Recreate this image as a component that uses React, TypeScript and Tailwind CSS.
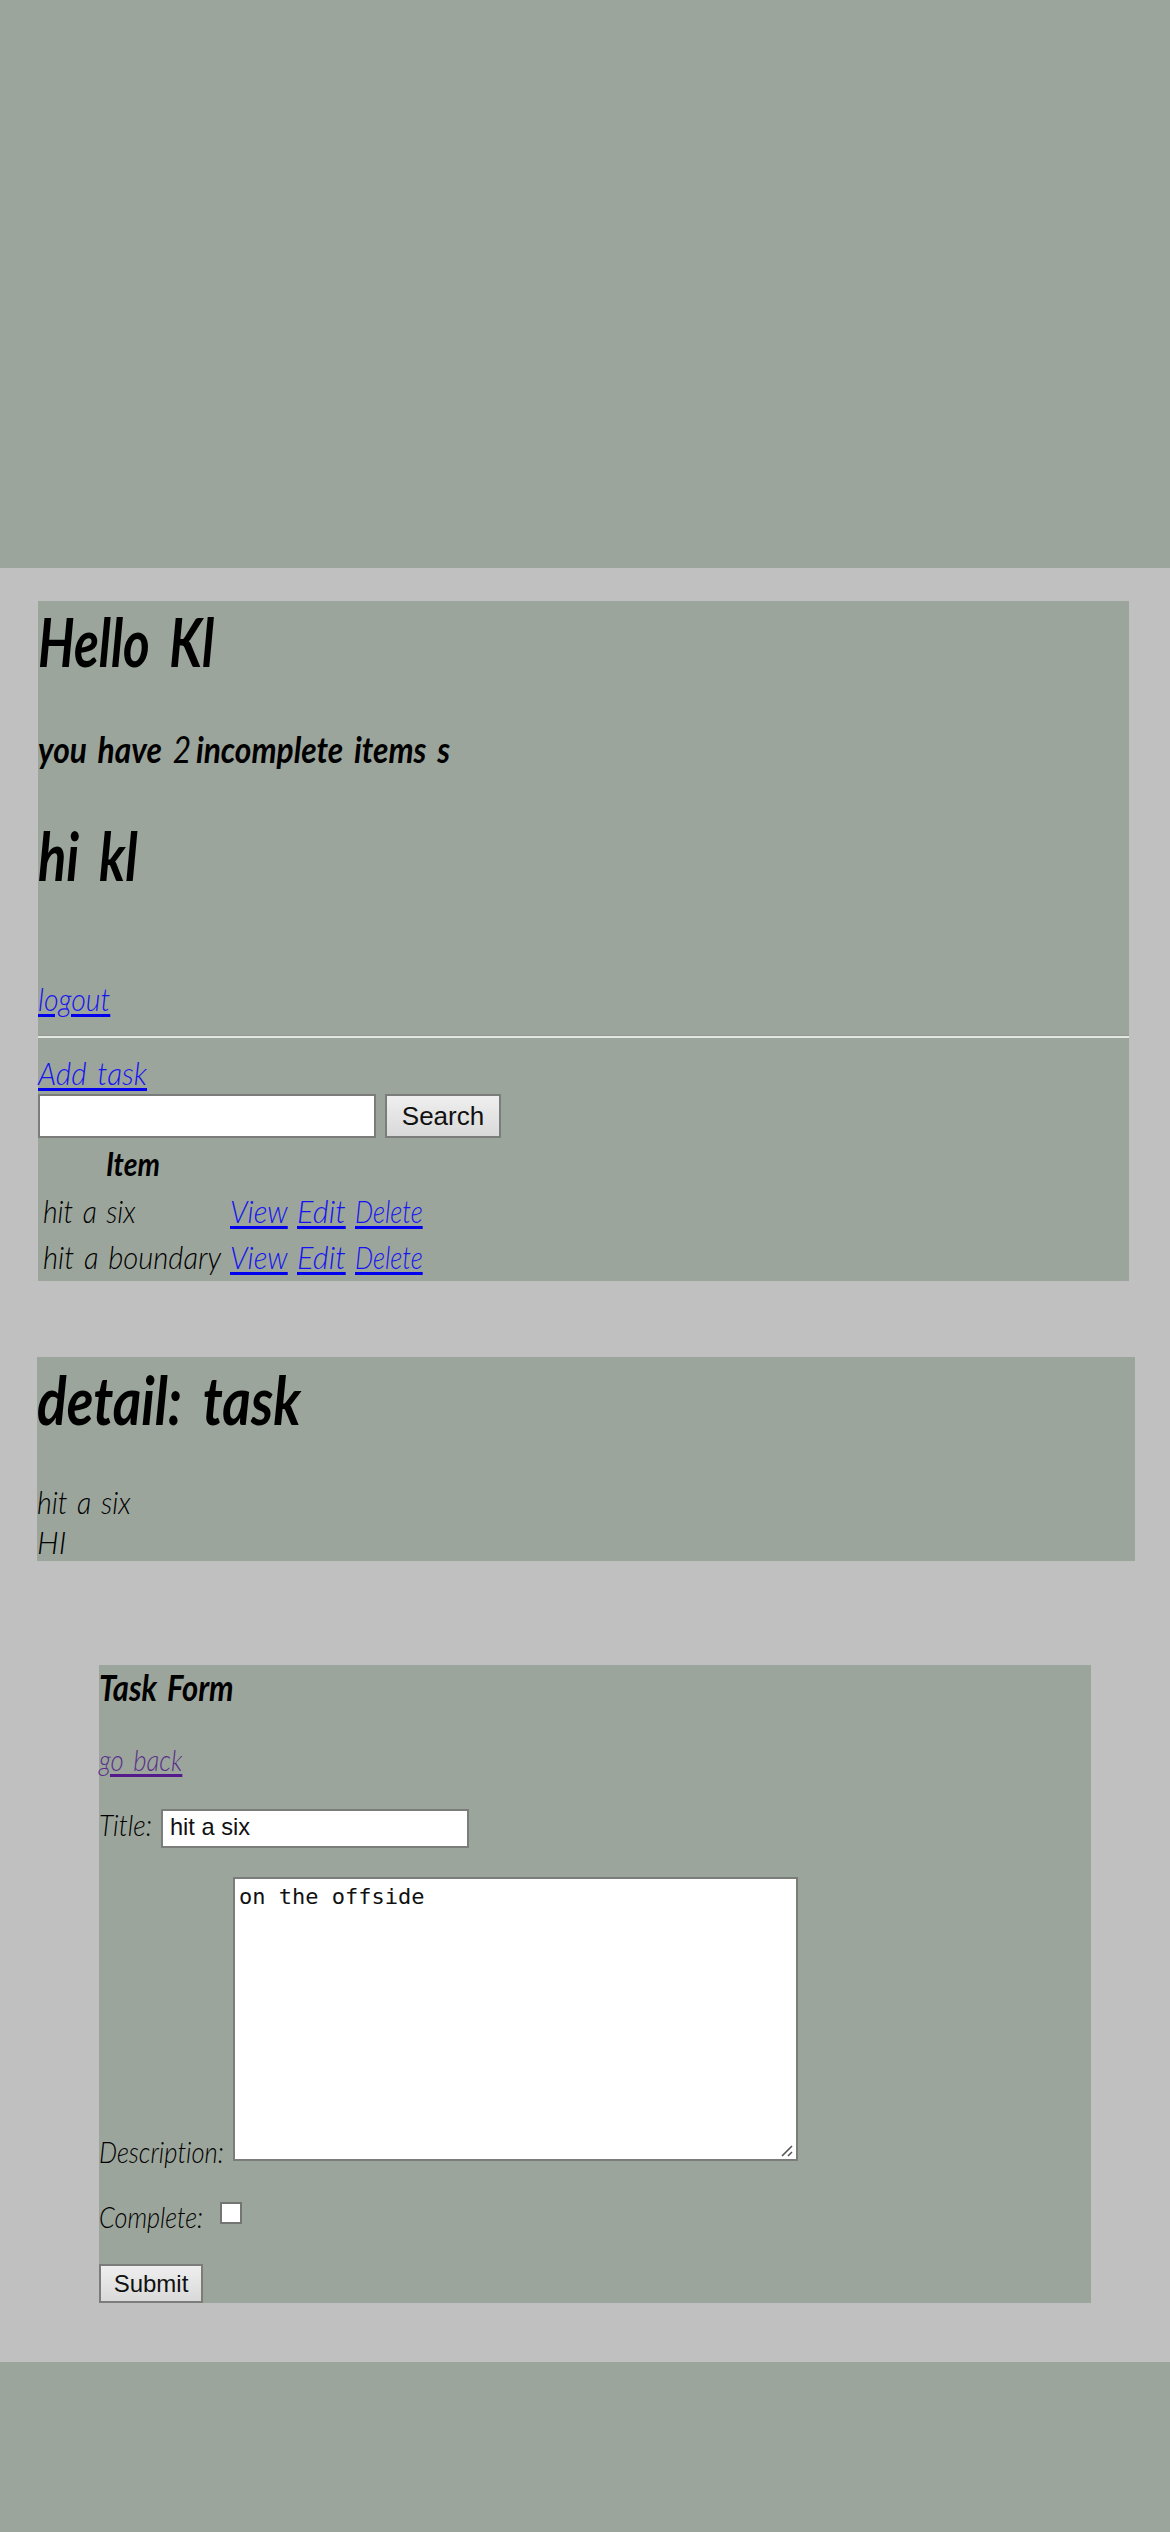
import { useLayoutEffect, useRef, useState, type ReactNode } from "react";

type InkProps = { width: number; className?: string; children: ReactNode };

/* Handwritten-style text, condensed horizontally to a given line width. */
function Ink({ width, className = "", children }: InkProps) {
  const ref = useRef<HTMLSpanElement>(null);
  const [scale, setScale] = useState(0.8);
  useLayoutEffect(() => {
    const fit = () => {
      if (ref.current) setScale(width / ref.current.offsetWidth);
    };
    fit();
    document.fonts.ready.then(fit);
  }, [width]);
  return (
    <span className="block shrink-0" style={{ width }}>
      <span
        ref={ref}
        className={`relative top-px inline-block origin-left whitespace-nowrap align-top [font-variant-ligatures:none] ${className}`}
        style={{ transform: `scaleX(${scale})` }}
      >
        {children}
      </span>
    </span>
  );
}

const body = "text-[32px] leading-[36px] font-light [word-spacing:0.08em]";
const link =
  "text-[32px] leading-[36px] font-light [word-spacing:0.12em] text-[#1414f0] underline decoration-[#0000ee] decoration-[3px] underline-offset-[3px]";
const title = "text-[67px] leading-[60px] font-bold [word-spacing:0.16em]";
const small = "text-[30px] font-light";
const button =
  "border-2 border-[#7b7d7b] bg-linear-to-b from-[#efefef] to-[#d9d9d9] font-['Liberation_Sans',sans-serif] not-italic text-[#111]";

function TaskRow({ name, width, className }: { name: string; width: number; className: string }) {
  return (
    <div className={`flex h-9 pl-[5px] ${className}`}>
      <div className="w-[187px]">
        <Ink width={width} className={body}>{name}</Ink>
      </div>
      <div className="flex gap-[9px]">
        <Ink width={58} className={link}>View</Ink>
        <Ink width={49} className={link}>Edit</Ink>
        <Ink width={68} className={link}>Delete</Ink>
      </div>
    </div>
  );
}

export default function App() {
  return (
    <div className="h-[2532px] w-[1170px] overflow-hidden bg-[#9ca59b] pt-[568px] font-['Lato',sans-serif] italic text-black">
      <main className="h-[1794px] bg-[#c0c0c0] pt-[33px]">
        <section className="ml-[38px] h-[680px] w-[1091px] bg-[#9ca59b] pt-[9px]">
          <h1><Ink width={176} className={title}>Hello Kl</Ink></h1>
          <h3 className="mt-[58px]">
            <Ink width={412} className="text-[37px] leading-[40px] font-bold [word-spacing:0.12em]">
              you have <span className="font-normal [word-spacing:-0.08em]">2 </span>incomplete items s
            </Ink>
          </h3>
          <h1 className="mt-[56px]"><Ink width={100} className={title}>hi kl</Ink></h1>
          <div className="mt-[96px]"><Ink width={72} className={link}>logout</Ink></div>
          <hr className="mt-[19px] h-[3px] border-0 border-t border-[#929a92] bg-[#e2e8e1]" />
          <div className="mt-4"><Ink width={109} className={link}>Add task</Ink></div>
          <div className="mt-1 flex h-11 gap-[9px]">
            <div className="w-[338px] border-2 border-[#7b7d7b] bg-white" />
            <button className={`w-[116px] text-[26px] leading-[38px] ${button}`}>Search</button>
          </div>
          <div className="mt-[7px] pl-[68px]">
            <Ink width={54} className="text-[32px] leading-[36px] font-bold">Item</Ink>
          </div>
          <TaskRow name="hit a six" width={93} className="mt-[11px]" />
          <TaskRow name="hit a boundary" width={178} className="mt-[10px]" />
        </section>

        <section className="mt-[76px] ml-[37px] h-[204px] w-[1098px] bg-[#9ca59b] pt-[11px]">
          <h1><Ink width={264} className={title}>detail: task</Ink></h1>
          <div className="mt-[55px]"><Ink width={94} className={body}>hit a six</Ink></div>
          <div className="mt-[4px]"><Ink width={29} className={body}>HI</Ink></div>
        </section>

        <section className="mt-[104px] ml-[99px] h-[638px] w-[992px] bg-[#9ca59b] pt-px">
          <h3><Ink width={135} className="text-[36px] leading-[40px] font-bold [word-spacing:0.1em]">Task Form</Ink></h3>
          <div className="mt-[34px]">
            <Ink width={83} className="text-[30px] leading-[36px] font-light [word-spacing:0.12em] text-[#59308c] underline decoration-[#551a8b] decoration-[3px] underline-offset-[3px]">
              go back
            </Ink>
          </div>
          <div className="mt-[33px] flex h-[39px] gap-[9px]">
            <Ink width={53} className={`${small} leading-[29px]`}>Title:</Ink>
            <div className="w-[308px] border-2 border-[#7b7d7b] bg-white pl-[7px] font-['Liberation_Sans',sans-serif] text-[23.6px] leading-[32px] not-italic text-[#111]">
              hit a six
            </div>
          </div>
          <div className="mt-[29px] flex h-[284px] items-end gap-[9px]">
            <div className="-mb-[7px]">
              <Ink width={125} className={`${small} leading-[36px]`}>Description:</Ink>
            </div>
            <div className="relative h-full w-[565px] border-2 border-[#7b7d7b] bg-white pt-[4px] pl-1 font-['DejaVu_Sans_Mono',monospace] text-[22px] leading-[28px] not-italic text-[#111]">
              on the offside
              <svg className="absolute right-[3px] bottom-[2px] size-3" viewBox="0 0 12 12" fill="none" stroke="#555" strokeWidth="1.6">
                <path d="M1 11 11 1M7 11l4-4" />
              </svg>
            </div>
          </div>
          <div className="mt-9 flex h-9">
            <div className="w-[121px]">
              <Ink width={104} className={`${small} leading-[36px]`}>Complete:</Ink>
            </div>
            <div className="mt-[5px] size-[22px] border-2 border-[#737573] bg-white" />
          </div>
          <button className={`mt-[31px] block h-[39px] w-[104px] text-[24px] leading-[34px] ${button}`}>Submit</button>
        </section>
      </main>
    </div>
  );
}
